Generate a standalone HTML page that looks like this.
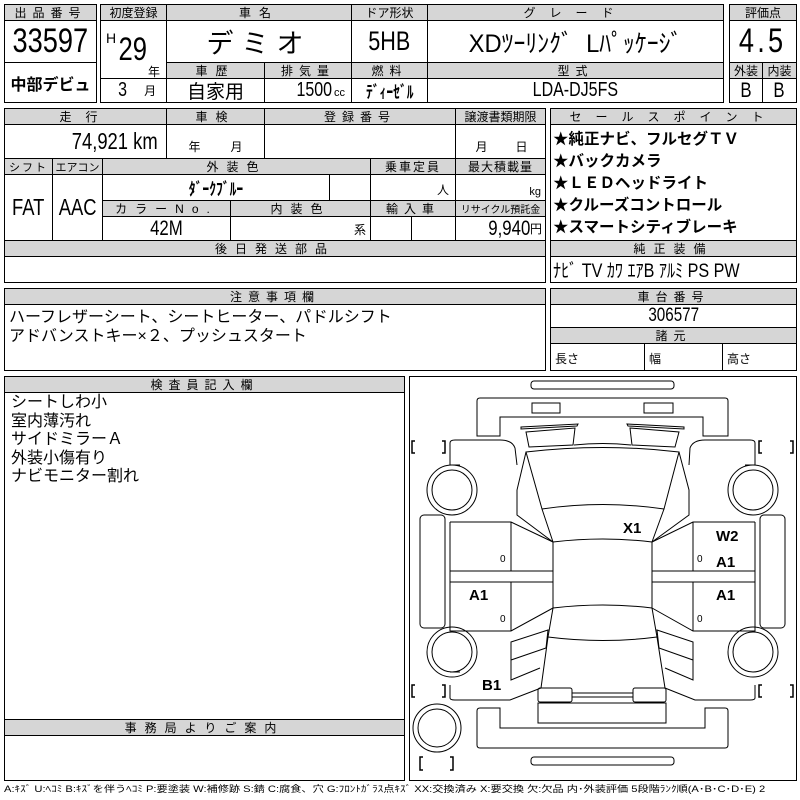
<!DOCTYPE html>
<html><head><meta charset="utf-8"><style>
body{margin:0;width:800px;height:800px;background:#fff;position:relative;overflow:hidden;font-family:"Liberation Sans","Noto Sans CJK JP",sans-serif;color:#000}
.c{position:absolute;box-sizing:border-box;border:1px solid #000;display:flex;align-items:center;justify-content:center;white-space:nowrap;overflow:hidden}
.h{background:#d6d6d6;font-size:12px;letter-spacing:4px}
.t{position:absolute;white-space:nowrap}
.n{display:inline-block;transform:scaleX(.8)}
</style></head><body>
<!-- box1 -->
<div class="c h" style="left:4px;top:4px;width:93px;height:17px;letter-spacing:6px">出品番号</div>
<div class="c" style="left:4px;top:20px;width:93px;height:43px;font-size:34px"><span class="n">33597</span></div>
<div class="c" style="left:4px;top:62px;width:93px;height:41px;font-size:16px;font-weight:bold">中部デビュ</div>
<!-- box2 -->
<div class="c h" style="left:100px;top:4px;width:67px;height:17px;letter-spacing:0">初度登録</div>
<div class="c h" style="left:166px;top:4px;width:186px;height:17px;letter-spacing:8px">車名</div>
<div class="c h" style="left:351px;top:4px;width:77px;height:17px;letter-spacing:0">ドア形状</div>
<div class="c h" style="left:427px;top:4px;width:297px;height:17px;letter-spacing:14px">グレード</div>
<div class="c" style="left:100px;top:20px;width:67px;height:59px"></div>
<div class="t" style="left:106px;top:30px;font-size:14px">H</div>
<div class="t" style="left:115px;top:31px;font-size:32px"><span class="n">29</span></div>
<div class="t" style="left:148px;top:63px;font-size:12px">年</div>
<div class="c" style="left:100px;top:78px;width:67px;height:25px;font-size:20px;justify-content:flex-start"><span class="n" style="margin-left:16px">3</span><span style="font-size:12px;margin-left:16px">月</span></div>
<div class="c" style="left:166px;top:20px;width:186px;height:43px;font-size:27px;letter-spacing:8px">デミオ</div>
<div class="c" style="left:351px;top:20px;width:77px;height:43px;font-size:27px"><span class="n">5HB</span></div>
<div class="c" style="left:427px;top:20px;width:297px;height:43px;font-size:25px"><span class="n" style="transform:scaleX(.95)">XDﾂｰﾘﾝｸﾞ&nbsp;&nbsp;Lﾊﾟｯｹｰｼﾞ</span></div>
<div class="c h" style="left:166px;top:62px;width:99px;height:17px;letter-spacing:8px">車歴</div>
<div class="c h" style="left:264px;top:62px;width:88px;height:17px;letter-spacing:6px">排気量</div>
<div class="c h" style="left:351px;top:62px;width:77px;height:17px;letter-spacing:6px">燃料</div>
<div class="c h" style="left:427px;top:62px;width:297px;height:17px;letter-spacing:6px">型式</div>
<div class="c" style="left:166px;top:78px;width:99px;height:25px;font-size:19px">自家用</div>
<div class="c" style="left:264px;top:78px;width:88px;height:25px;font-size:20px;justify-content:flex-end"><span class="n" style="margin-right:-4px">1500</span><span style="font-size:11px;margin:4px 6px 0 2px">cc</span></div>
<div class="c" style="left:351px;top:78px;width:77px;height:25px;font-size:17px"><span class="n" style="font-weight:bold">ﾃﾞｨｰｾﾞﾙ</span></div>
<div class="c" style="left:427px;top:78px;width:297px;height:25px;font-size:20px"><span class="n">LDA-DJ5FS</span></div>
<!-- box3 -->
<div class="c h" style="left:729px;top:4px;width:68px;height:17px;letter-spacing:0">評価点</div>
<div class="c" style="left:729px;top:20px;width:68px;height:43px;font-size:34px;letter-spacing:4px"><span class="n">4.5</span></div>
<div class="c h" style="left:729px;top:62px;width:34px;height:17px;letter-spacing:0">外装</div>
<div class="c h" style="left:762px;top:62px;width:35px;height:17px;letter-spacing:0">内装</div>
<div class="c" style="left:729px;top:78px;width:34px;height:25px;font-size:21px"><span class="n">B</span></div>
<div class="c" style="left:762px;top:78px;width:35px;height:25px;font-size:21px"><span class="n">B</span></div>
<!-- box4 -->
<div class="c h" style="left:4px;top:108px;width:163px;height:17px;letter-spacing:14px">走行</div>
<div class="c h" style="left:166px;top:108px;width:99px;height:17px;letter-spacing:8px">車検</div>
<div class="c h" style="left:264px;top:108px;width:192px;height:17px;letter-spacing:6px">登録番号</div>
<div class="c h" style="left:455px;top:108px;width:91px;height:17px;letter-spacing:0">譲渡書類期限</div>
<div class="c" style="left:4px;top:124px;width:163px;height:35px;font-size:23px;justify-content:flex-end"><span class="n" style="margin-right:-2px">74,921 km</span></div>
<div class="c" style="left:166px;top:124px;width:99px;height:35px;font-size:12px;align-items:flex-end;padding-bottom:3px;letter-spacing:30px;padding-left:30px">年月</div>
<div class="c" style="left:264px;top:124px;width:192px;height:35px"></div>
<div class="c" style="left:455px;top:124px;width:91px;height:35px;font-size:12px;align-items:flex-end;padding-bottom:3px;letter-spacing:28px;padding-left:30px">月日</div>
<div class="c h" style="left:4px;top:158px;width:49px;height:17px;letter-spacing:2px;font-size:11px">シフト</div>
<div class="c h" style="left:52px;top:158px;width:51px;height:17px;letter-spacing:0;font-size:11px">エアコン</div>
<div class="c h" style="left:102px;top:158px;width:269px;height:17px;letter-spacing:8px">外装色</div>
<div class="c h" style="left:370px;top:158px;width:86px;height:17px;letter-spacing:2px">乗車定員</div>
<div class="c h" style="left:455px;top:158px;width:91px;height:17px;letter-spacing:1px">最大積載量</div>
<div class="c" style="left:4px;top:174px;width:49px;height:67px;font-size:23px"><span class="n">FAT</span></div>
<div class="c" style="left:52px;top:174px;width:51px;height:67px;font-size:23px"><span class="n">AAC</span></div>
<div class="c" style="left:102px;top:174px;width:228px;height:27px;font-size:17px;font-weight:bold"><span class="n">ﾀﾞｰｸﾌﾞﾙｰ</span></div>
<div class="c" style="left:329px;top:174px;width:42px;height:27px"></div>
<div class="c" style="left:370px;top:174px;width:86px;height:27px;font-size:12px;justify-content:flex-end;align-items:flex-end;padding:0 6px 2px 0">人</div>
<div class="c" style="left:455px;top:174px;width:91px;height:27px;font-size:11px;justify-content:flex-end;align-items:flex-end;padding:0 4px 2px 0">kg</div>
<div class="c h" style="left:102px;top:200px;width:129px;height:17px;letter-spacing:8px">カラーNo.</div>
<div class="c h" style="left:230px;top:200px;width:141px;height:17px;letter-spacing:8px">内装色</div>
<div class="c h" style="left:370px;top:200px;width:86px;height:17px;letter-spacing:6px">輸入車</div>
<div class="c h" style="left:455px;top:200px;width:91px;height:17px;letter-spacing:0;font-size:10px">リサイクル預託金</div>
<div class="c" style="left:102px;top:216px;width:129px;height:25px;font-size:21px"><span class="n">42M</span></div>
<div class="c" style="left:230px;top:216px;width:141px;height:25px;font-size:12px;justify-content:flex-end;align-items:flex-end;padding:0 4px 2px 0">系</div>
<div class="c" style="left:370px;top:216px;width:42px;height:25px"></div>
<div class="c" style="left:411px;top:216px;width:45px;height:25px"></div>
<div class="c" style="left:455px;top:216px;width:91px;height:25px;font-size:21px;justify-content:flex-end"><span class="n" style="margin-right:-6px">9,940</span><span style="font-size:12px;margin-right:3px">円</span></div>
<div class="c h" style="left:4px;top:240px;width:542px;height:17px;letter-spacing:8px">後日発送部品</div>
<div class="c" style="left:4px;top:256px;width:542px;height:27px"></div>
<!-- box5 -->
<div class="c h" style="left:550px;top:108px;width:247px;height:17px;letter-spacing:14px">セールスポイント</div>
<div class="c" style="left:550px;top:124px;width:247px;height:117px;display:block;font-size:15.5px;font-weight:bold;line-height:22px;padding:4px 0 0 2px">★純正ナビ、フルセグＴＶ<br>★バックカメラ<br>★ＬＥＤヘッドライト<br>★クルーズコントロール<br>★スマートシティブレーキ</div>
<div class="c h" style="left:550px;top:240px;width:247px;height:17px;letter-spacing:8px">純正装備</div>
<div class="c" style="left:550px;top:256px;width:247px;height:27px;font-size:19px;justify-content:flex-start;padding-left:2px"><span class="n" style="transform-origin:left;transform:scaleX(.85)">ﾅﾋﾞ TV ｶﾜ ｴｱB ｱﾙﾐ PS PW</span></div>
<!-- box6 -->
<div class="c h" style="left:4px;top:288px;width:542px;height:17px;letter-spacing:6px">注意事項欄</div>
<div class="c" style="left:4px;top:304px;width:542px;height:67px;display:block;font-size:16px;line-height:19px;padding:3px 0 0 4px">ハーフレザーシート、シートヒーター、パドルシフト<br>アドバンストキー×２、プッシュスタート</div>
<!-- box7 -->
<div class="c h" style="left:550px;top:288px;width:247px;height:17px;letter-spacing:6px">車台番号</div>
<div class="c" style="left:550px;top:304px;width:247px;height:24px;font-size:19px"><span class="n">306577</span></div>
<div class="c h" style="left:550px;top:327px;width:247px;height:17px;letter-spacing:6px">諸元</div>
<div class="c" style="left:550px;top:343px;width:95px;height:28px;font-size:12px;justify-content:flex-start;align-items:flex-end;padding:0 0 3px 4px">長さ</div>
<div class="c" style="left:644px;top:343px;width:79px;height:28px;font-size:12px;justify-content:flex-start;align-items:flex-end;padding:0 0 3px 4px">幅</div>
<div class="c" style="left:722px;top:343px;width:75px;height:28px;font-size:12px;justify-content:flex-start;align-items:flex-end;padding:0 0 3px 4px">高さ</div>
<!-- box8 -->
<div class="c h" style="left:4px;top:376px;width:401px;height:17px;letter-spacing:6px">検査員記入欄</div>
<div class="c" style="left:4px;top:392px;width:401px;height:328px;display:block;font-size:16px;line-height:18.5px;padding:1px 0 0 6px">シートしわ小<br>室内薄汚れ<br>サイドミラーＡ<br>外装小傷有り<br>ナビモニター割れ</div>
<div class="c h" style="left:4px;top:719px;width:401px;height:17px;letter-spacing:8px">事務局よりご案内</div>
<div class="c" style="left:4px;top:735px;width:401px;height:46px"></div>
<!-- diagram -->
<div class="c" style="left:409px;top:376px;width:388px;height:405px"></div>
<svg style="position:absolute;left:0;top:0" width="800" height="800" fill="none" stroke="#000" stroke-width="1">
<rect x="531" y="381" width="143" height="8" rx="3"/>
<rect x="531" y="757" width="143" height="8" rx="3"/>
<path d="M480 398 H725 Q728 398 728 401 V436 H703 V417 H500 V436 H477 V401 Q477 398 480 398Z"/>
<rect x="532" y="403" width="28" height="10"/>
<rect x="644" y="403" width="29" height="10"/>
<path d="M521 427 L578 424 L577 426 L521 429Z M526 432 L575 428 L573 445 L529 447Z"/>
<path d="M627 424 L684 427 L684 429 L628 426Z M630 428 L679 432 L675 447 L632 445Z"/>
<path d="M574 445 Q603 442 631 445"/>
<path d="M526 452 Q603 443 679 452 L664 509 Q603 500 542 509Z"/>
<path d="M542 509 L553 542 M664 509 L652 542"/>
<path d="M553 542 Q603 536 652 542 V608 Q603 602 553 608Z"/>
<path d="M553 608 L548 637 L541 688 M652 608 L657 637 L665 688"/>
<path d="M548 637 Q603 644 657 637"/>
<path d="M526 452 L517 490 L517 515 L553 542 M679 452 L689 490 L689 515 L652 542"/>
<path d="M450 443 Q450 440 455 440 H500 Q512 440 515 448 L517 465 M450 443 V465 H460"/>
<path d="M755 443 Q755 440 750 440 H705 Q693 440 690 448 L689 465 M755 443 V465 H745"/>
<path d="M450 685 V698 Q450 700 455 700 H510 L541 688 M450 672 H460"/>
<path d="M755 685 V698 Q755 700 750 700 H695 L665 688"/>
<path d="M450 522 H511 L553 542 M511 522 V571 M450 522 V631 H511 L553 608 M450 571 H553 M450 582 H553 M511 582 V631"/>
<path d="M755 522 H693 L652 542 M693 522 V571 M755 522 V631 H693 L652 608 M755 571 H652 M755 582 H652 M693 582 V631"/>
<path d="M511 642 L548 630 L546 648 L511 660Z M511 660 V680 L540 668"/>
<path d="M693 642 L657 630 L659 648 L693 660Z M693 660 V680 L665 668"/>
<rect x="420" y="515" width="25" height="113" rx="4"/>
<rect x="760" y="515" width="25" height="113" rx="4"/>
<circle cx="452" cy="490" r="25"/><circle cx="452" cy="490" r="20"/>
<circle cx="753" cy="490" r="25"/><circle cx="753" cy="490" r="20"/>
<circle cx="452" cy="652" r="25"/><circle cx="452" cy="652" r="20"/>
<circle cx="753" cy="652" r="25"/><circle cx="753" cy="652" r="20"/>
<circle cx="437" cy="728" r="24"/><circle cx="437" cy="728" r="19"/>
<rect x="538" y="688" width="34" height="14" rx="2"/>
<rect x="633" y="688" width="33" height="14" rx="2"/>
<path d="M572 693 H633 M572 697 H633"/>
<rect x="538" y="703" width="128" height="20"/>
<path d="M480 708 H500 V728 H705 V708 H725 Q728 708 728 711 V745 Q728 748 725 748 H480 Q477 748 477 745 V711 Q477 708 480 708Z"/>
<g stroke-width="1.5">
<path d="M415 441 H412 V453 H415 M442 441 H445 V453 H442"/>
<path d="M762 441 H759 V453 H762 M790 441 H793 V453 H790"/>
<path d="M415 685 H412 V697 H415 M442 685 H445 V697 H442"/>
<path d="M762 685 H759 V697 H762 M790 685 H793 V697 H790"/>
<path d="M423 757 H420 V770 H423 M450 757 H453 V770 H450"/>
</g>
<g fill="#000" stroke="none" font-family="Liberation Sans" font-weight="bold" font-size="15">
<text x="623" y="533">X1</text><text x="716" y="541">W2</text>
<text x="716" y="567">A1</text><text x="716" y="600">A1</text>
<text x="469" y="600">A1</text><text x="482" y="690">B1</text>
<g font-size="10" font-weight="normal"><text x="500" y="562">0</text><text x="697" y="562">0</text><text x="500" y="622">0</text><text x="697" y="622">0</text></g>
</g>
</svg>
<div class="t" style="left:4px;top:782px;font-size:9px;letter-spacing:0;transform:scaleX(1.24);transform-origin:left">A:ｷｽﾞ U:ﾍｺﾐ B:ｷｽﾞを伴うﾍｺﾐ P:要塗装 W:補修跡 S:錆 C:腐食、穴 G:ﾌﾛﾝﾄｶﾞﾗｽ点ｷｽﾞ XX:交換済み X:要交換 欠:欠品 内･外装評価 5段階ﾗﾝｸ順(A･B･C･D･E) 2</div>
</body></html>
